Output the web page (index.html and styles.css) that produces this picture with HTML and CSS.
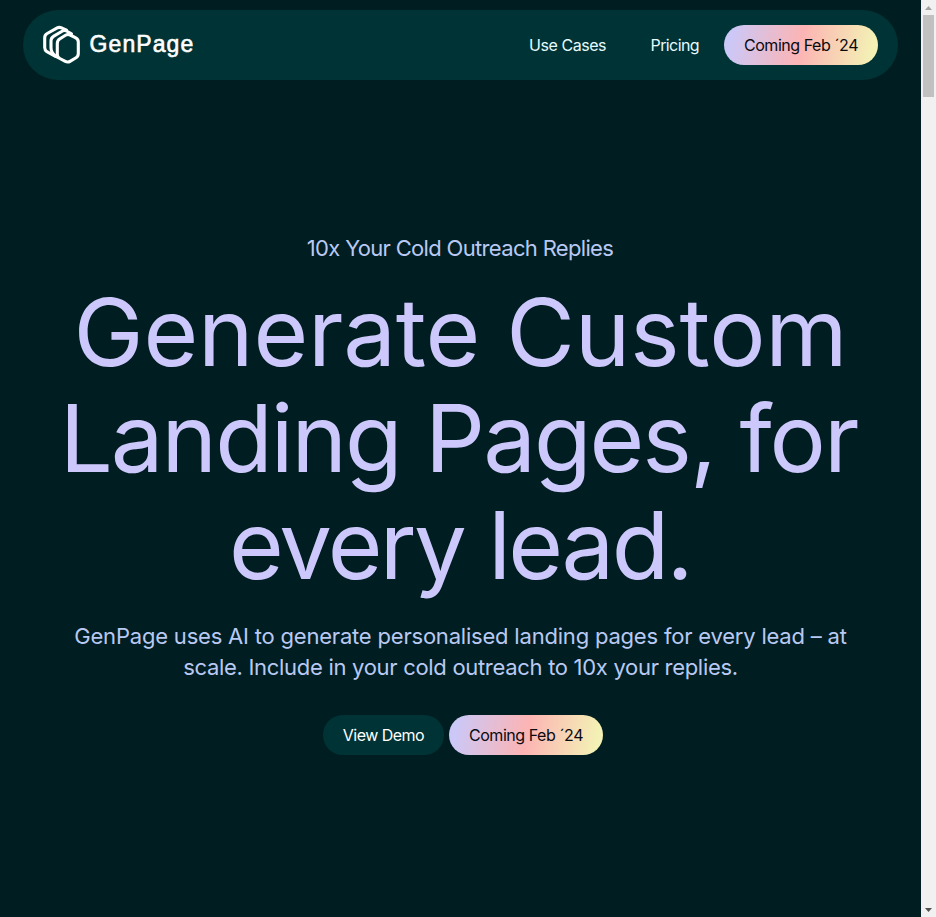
FILE: index.html
```html
<!DOCTYPE html>
<html lang="en">
<head>
<meta charset="utf-8">
<title>GenPage</title>
<link rel="stylesheet" href="styles.css">
</head>
<body>
<div class="page">
  <header class="nav">
    <a class="brand">
      <svg class="brand-mark" width="40" height="40" viewBox="0 0 40 40" fill="none" stroke="#fff" stroke-width="3.1" stroke-linejoin="round" stroke-linecap="round">
        <path d="M16.300 18.500 Q16.300 15.500 18.600 14 L24.500 10.200 Q26.800 8.800 29.200 10 L34.800 12.800 Q37.300 14.100 37.300 17 V28.500 Q37.300 31.300 35 32.700 L29 36.300 Q26.700 37.700 24.300 36.400 L18.800 33.500 Q16.300 32.200 16.300 29.500 Z"/>
        <path d="M30.500 8.800 L25.500 6 Q23.500 4.900 21.500 6 L12.800 11.200 Q10 12.900 10 15.800 V23 Q10 28.500 16 32"/>
        <path d="M25.500 5.200 L20.500 2.800 Q18.300 1.800 16.200 2.900 L6.200 8.500 Q3.700 9.900 3.700 12.800 V22.500 Q3.700 25.200 5.900 26.700 L14.500 31.500"/>
      </svg>
      <span class="brand-name">GenPage</span>
    </a>
    <nav class="links">
      <a class="link link-cases">Use Cases</a>
      <a class="link link-pricing">Pricing</a>
      <a class="btn btn-gradient">Coming Feb ´24</a>
    </nav>
  </header>
  <main class="hero">
    <p class="tagline">10x Your Cold Outreach Replies</p>
    <h1 class="title">
      <span class="l1">Generate Custom</span>
      <span class="l2">Landing Pages, for</span>
      <span class="l3">every lead.</span>
    </h1>
    <p class="lead">GenPage uses AI to generate personalised landing pages for every lead – at<br><span class="lead-2">scale. Include in your cold outreach to 10x your replies.</span></p>
    <div class="actions">
      <a class="btn btn-dark">View Demo</a>
      <a class="btn btn-gradient">Coming Feb ´24</a>
    </div>
  </main>
</div>
<div class="scrollbar">
  <svg width="15" height="15"><path d="M4 10 L7.500 6 L11 10 Z" fill="#a3a3a3"/></svg>
  <div class="thumb"></div>
  <svg class="down" width="15" height="15"><path d="M4 6 H11 L7.500 10 Z" fill="#505050"/></svg>
</div>
</body>
</html>
```
FILE: styles.css
```css
* { box-sizing: border-box; }
body {
  margin: 0;
  height: 917px;
  display: flex;
  overflow: hidden;
  background: #001e21;
  font-family: Inter, "Liberation Sans", sans-serif;
  font-weight: 400;
}
.page { width: 921px; padding: 10px 23px 0; }
.nav {
  height: 70px;
  display: flex;
  align-items: center;
  justify-content: space-between;
  padding: 0 20px;
  border-radius: 35px;
  background: #003335;
}
.brand { display: flex; align-items: center; height: 40px; margin-left: -2px; }
.brand-mark { display: block; }
.brand-name {
  margin: -3px 0 0 8.500px;
  font: 400 23px/30px "Liberation Sans", sans-serif;
  letter-spacing: 1.1px;
  color: #fff;
  -webkit-text-stroke: 0.6px #fff;
}
.links { display: flex; align-items: center; font-size: 16px; }
.link { color: #e6fbff; line-height: 40px; white-space: nowrap; }
.link-cases { letter-spacing: -0.45px; margin-right: 44.500px; }
.link-pricing { letter-spacing: -0.6px; margin-right: 25px; }
.btn {
  height: 40px;
  border-radius: 20px;
  font-size: 16px;
  line-height: 40px;
  letter-spacing: -0.45px;
  text-align: center;
  white-space: nowrap;
}
.btn-gradient {
  width: 154px;
  color: #0a0a0f;
  background: linear-gradient(100deg, #cbc8f8 5%, #fcb4b4 50%, #f3f1b5 95%);
}
.btn-dark { width: 121px; color: #fff; background: #003335; letter-spacing: -0.52px; }
.hero { text-align: center; color: #ccc8fc; }
.tagline {
  margin: 153px 1px 0 0;
  font-size: 22px;
  line-height: 30px;
  letter-spacing: -0.67px;
  color: #b9c9f3;
}
.title { margin: 16px 0 0; font-size: 94px; font-weight: 400; line-height: 106.4px; }
.title span { display: block; white-space: nowrap; }
.l1 { letter-spacing: -0.2px; }
.l2 { letter-spacing: -2px; margin: 0 2px 0 -2px; }
.l3 { letter-spacing: -2.6px; margin-right: 1px; }
.lead {
  margin: 23px -20px 0;
  font-size: 22px;
  line-height: 31px;
  letter-spacing: -0.2px;
  white-space: nowrap;
  color: #b9c9f3;
}
.lead-2 { letter-spacing: -0.3px; }
.actions { display: flex; justify-content: center; gap: 5px; margin: 32px 0 0 5px; }
.scrollbar { width: 15px; display: flex; flex-direction: column; background: #f1f1f1; }
.scrollbar svg { display: block; }
.thumb { width: 11px; height: 82px; margin: 0 auto; background: #c1c1c1; }
.down { margin-top: auto; }
```
